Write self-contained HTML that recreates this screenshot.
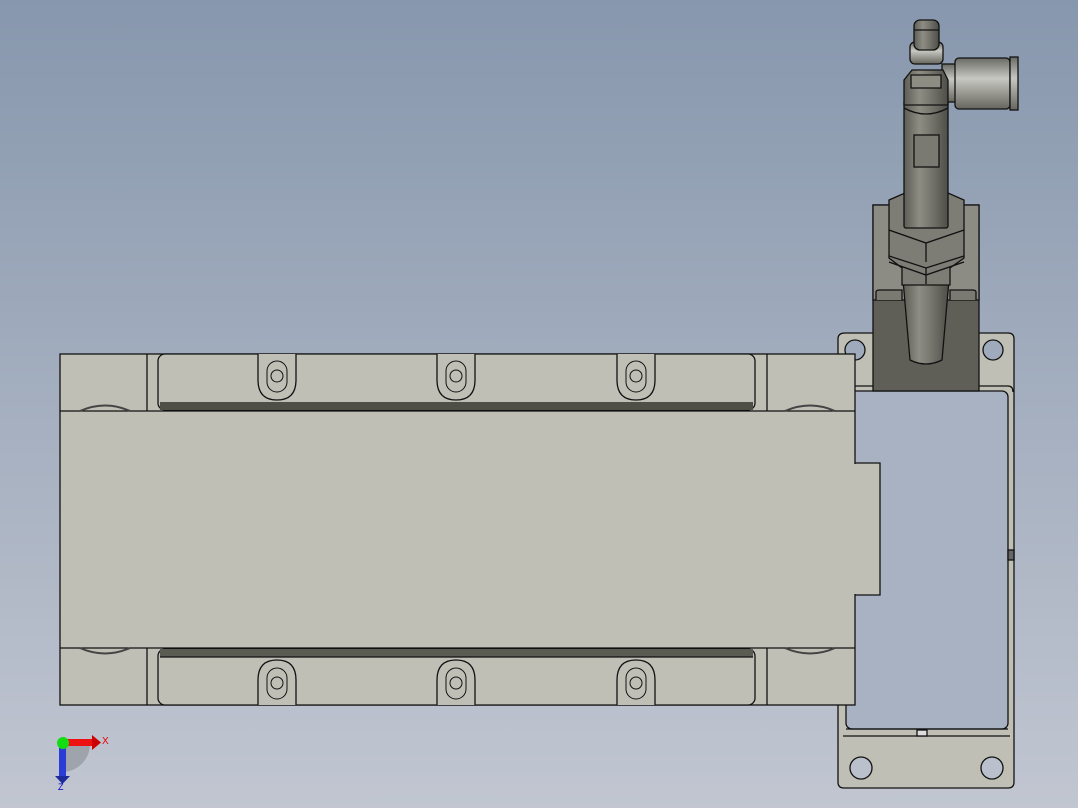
<!DOCTYPE html>
<html><head><style>
html,body{margin:0;padding:0;width:1078px;height:808px;overflow:hidden}
svg{display:block}
</style></head><body>
<svg width="1078" height="808" viewBox="0 0 1078 808" xmlns="http://www.w3.org/2000/svg">
<defs>
<linearGradient id="bg" x1="0" y1="0" x2="0" y2="1">
<stop offset="0" stop-color="#8797ad"/><stop offset="1" stop-color="#c1c6d1"/>
</linearGradient>
<linearGradient id="cyl" x1="0" y1="0" x2="1" y2="0">
<stop offset="0" stop-color="#5d5d55"/><stop offset="0.35" stop-color="#8d8d84"/><stop offset="0.6" stop-color="#77776f"/><stop offset="1" stop-color="#4e4e48"/>
</linearGradient>
<linearGradient id="fit" x1="0" y1="0" x2="0" y2="1">
<stop offset="0" stop-color="#6a6a64"/><stop offset="0.4" stop-color="#c8c8c2"/><stop offset="1" stop-color="#66665f"/>
</linearGradient>
</defs>
<rect width="1078" height="808" fill="url(#bg)"/>
<g stroke="#111" stroke-width="1.3" fill="#bfbfb6">
<path d="M845 333 H1008 Q1014 333 1014 339 V782 Q1014 788 1008 788 H844 Q838 788 838 782 V339 Q838 333 845 333 Z"/>
<rect x="846" y="391" width="162" height="338" rx="6" fill="#a9b2c2"/>
<path d="M846 729 H1008 M843 736 H1010" fill="none"/>
<path d="M840 386 H1008 Q1013 386 1013 392" fill="none"/>
<circle cx="855" cy="350" r="10" fill="#9fabbd"/>
<circle cx="993" cy="350" r="10" fill="#9fabbd"/>
<circle cx="861" cy="768" r="11" fill="#bac0cc"/>
<circle cx="992" cy="768" r="11" fill="#bac0cc"/>
<rect x="1008" y="550" width="6" height="10" fill="#666"/>
<rect x="917" y="730" width="10" height="6" fill="#ddd"/>
<path d="M850 463 H880 V595 H850 Z"/>
<rect x="60" y="354" width="795" height="351"/>
<rect x="854" y="464" width="3" height="130" fill="#bfbfb6" stroke="none"/>
<path d="M60 411 H855 M60 648 H855 M147 354 V411 M147 648 V705 M767 354 V411 M767 648 V705" fill="none"/>
<path d="M80 411 Q105 400 130 411 M785 411 Q810 400 835 411 M80 648 Q105 659 130 648 M785 648 Q810 659 835 648" fill="none" stroke-width="2" stroke="#444"/>
<rect x="158" y="354" width="597" height="56" rx="7"/>
<rect x="160" y="402" width="593" height="8" fill="#4e4f47" stroke="none"/>
<rect x="158" y="649" width="597" height="56" rx="7"/>
<rect x="160" y="649" width="593" height="8" fill="#5a5b53" stroke="none"/>
<path d="M160 657 H753" fill="none"/>
</g>
<g stroke="#111" stroke-width="1.3" fill="#bfbfb6">
<path d="M258 354 V380 Q258 400 277 400 Q296 400 296 380 V354"/>
<path d="M437 354 V380 Q437 400 456 400 Q475 400 475 380 V354"/>
<path d="M617 354 V380 Q617 400 636 400 Q655 400 655 380 V354"/>
<path d="M258 705 V680 Q258 660 277 660 Q296 660 296 680 V705"/>
<path d="M437 705 V680 Q437 660 456 660 Q475 660 475 680 V705"/>
<path d="M617 705 V680 Q617 660 636 660 Q655 660 655 680 V705"/>
</g>
<g stroke="#111" stroke-width="1" fill="none">
<rect x="267" y="361" width="20" height="31" rx="10"/><circle cx="277" cy="376" r="6"/>
<rect x="446" y="361" width="20" height="31" rx="10"/><circle cx="456" cy="376" r="6"/>
<rect x="626" y="361" width="20" height="31" rx="10"/><circle cx="636" cy="376" r="6"/>
<rect x="267" y="668" width="20" height="31" rx="10"/><circle cx="277" cy="683" r="6"/>
<rect x="446" y="668" width="20" height="31" rx="10"/><circle cx="456" cy="683" r="6"/>
<rect x="626" y="668" width="20" height="31" rx="10"/><circle cx="636" cy="683" r="6"/>
</g>
<g stroke="#111" stroke-width="1.3">
<rect x="873" y="205" width="106" height="186" fill="#5f5f58"/>
<rect x="873" y="205" width="106" height="95" fill="#8c8c84"/>
<path d="M876 300 V292 Q876 290 880 290 H902 V300 M976 300 V292 Q976 290 972 290 H950 V300" fill="#7a7a72"/>
<path d="M903 280 L910 360 Q926 368 942 360 L949 280 Z" fill="url(#cyl)"/>
<path d="M889 200 L905 193 H948 L964 200 V258 L950 268 V285 H902 V268 L889 258 Z" fill="#7d7d75"/>
<path d="M889 230 L926 243 L964 230 M889 256 L926 268 L964 256 M926 243 V262 M926 268 V284 M889 262 L926 275 L964 262" fill="none"/>
<rect x="904" y="100" width="44" height="128" rx="2" fill="url(#cyl)"/>
<rect x="914" y="135" width="25" height="32" fill="#7a7a72"/>
<path d="M904 108 Q926 120 948 108" fill="none"/>
<rect x="942" y="64" width="14" height="38" fill="url(#fit)"/>
<rect x="955" y="58" width="55" height="51" rx="4" fill="url(#fit)"/>
<rect x="1010" y="57" width="8" height="53" fill="url(#fit)"/>
<path d="M904 80 L912 70 H943 L948 80 V105 H904 Z" fill="url(#cyl)"/>
<path d="M911 75 H941 V88 H911 Z" fill="#8d8d84"/>
<rect x="910" y="42" width="33" height="22" rx="5" fill="url(#fit)"/>
<rect x="914" y="20" width="25" height="30" rx="6" fill="url(#cyl)"/>
<path d="M914 30 H939" fill="none"/>
</g>
<g>
<path d="M62 745 A28 28 0 0 1 90 745 A28 28 0 0 1 62 772 Z" fill="#666" opacity="0.35"/>
<rect x="59" y="744" width="7" height="32" fill="#2a3cd6"/>
<path d="M55 776 H70 L62.5 784 Z" fill="#1d2a9a"/>
<rect x="64" y="739" width="29" height="7" fill="#e11"/>
<path d="M92 735 L101 742.5 L92 750 Z" fill="#c00"/>
<circle cx="63" cy="743" r="6" fill="#1d1"/>
<text x="102" y="744" font-family="Liberation Sans,sans-serif" font-size="10" fill="#e00">X</text>
<text x="58" y="790" font-family="Liberation Sans,sans-serif" font-size="9" fill="#00c">Z</text>
</g>
</svg>
</body></html>
